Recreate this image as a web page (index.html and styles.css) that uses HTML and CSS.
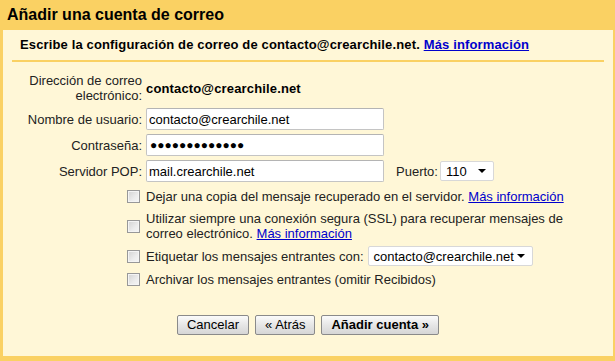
FILE: index.html
```html
<!DOCTYPE html>
<html lang="es">
<head>
<meta charset="utf-8">
<title>Añadir una cuenta de correo</title>
<link rel="stylesheet" href="styles.css">
</head>
<body>
<div class="dialog">
  <h1 class="title">Añadir una cuenta de correo</h1>
  <div class="panel">
    <p class="intro">Escribe la configuración de correo de contacto@crearchile.net. <a href="#" class="link">Más información</a></p>
    <div class="separator"></div>
    <div class="form">
      <div class="label first">Dirección de correo<br>electrónico:</div>
      <div class="value first">contacto@crearchile.net</div>

      <div class="label">Nombre de usuario:</div>
      <div class="field"><input class="text-input" type="text" value="contacto@crearchile.net"></div>

      <div class="label">Contraseña:</div>
      <div class="field"><input class="text-input secret" type="text" value="●●●●●●●●●●●●●"></div>

      <div class="label">Servidor POP:</div>
      <div class="field">
        <input class="text-input" type="text" value="mail.crearchile.net">
        <span class="port-label">Puerto:</span>
        <div class="select port"><span>110</span><span class="caret"></span></div>
      </div>
    </div>

    <div class="options">
      <div class="opt"><span class="cb"></span><span class="opt-text">Dejar una copia del mensaje recuperado en el servidor. <a href="#" class="link plain">Más información</a></span></div>
      <div class="opt two"><span class="cb"></span><span class="opt-text">Utilizar siempre una conexión segura (SSL) para recuperar mensajes de correo electrónico. <a href="#" class="link plain">Más información</a></span></div>
      <div class="opt"><span class="cb"></span><span class="opt-text row">Etiquetar los mensajes entrantes con: <span class="select label-select"><span>contacto@crearchile.net</span><span class="caret"></span></span></span></div>
      <div class="opt"><span class="cb"></span><span class="opt-text">Archivar los mensajes entrantes (omitir Recibidos)</span></div>
    </div>

    <div class="buttons">
      <button class="btn">Cancelar</button>
      <button class="btn">« Atrás</button>
      <button class="btn primary">Añadir cuenta »</button>
    </div>
  </div>
</div>
</body>
</html>
```

FILE: styles.css
```css
html {
  background: #fad163;
}
body {
  margin: 0;
  font-family: "Liberation Sans", Arial, sans-serif;
  font-size: 13px;
  color: #000;
}
.dialog {
  background: #fad163;
  padding: 0 2px 5px 3px;
}
.title {
  margin: 0;
  height: 30px;
  line-height: 30px;
  padding-left: 4px;
  font-size: 16px;
  font-weight: bold;
  color: #000;
}
.panel {
  background: #fff7d7;
  padding: 7px 0 21px 0;
}
.intro {
  margin: 0;
  padding-left: 17px;
  line-height: 15px;
  font-weight: bold;
  letter-spacing: 0.14px;
}
.link {
  color: #0000cc;
  text-decoration: underline;
}
.link.plain {
  font-weight: normal;
}
.separator {
  margin: 8px 9px 0 9px;
  height: 2px;
  background: #fad163;
}
.form {
  margin-top: 11px;
  display: grid;
  grid-template-columns: 139px auto;
  column-gap: 4px;
  row-gap: 4px;
  align-items: center;
}
.label {
  text-align: right;
  color: #222;
  line-height: 15px;
}
.label.first,
.value.first {
  margin-bottom: 1px;
}
.value {
  font-weight: bold;
  line-height: 15px;
  letter-spacing: 0.15px;
}
.field {
  display: flex;
  align-items: center;
}
.text-input {
  box-sizing: border-box;
  width: 238px;
  height: 22px;
  margin: 0;
  padding: 0 2px;
  border: 1px solid #c4c4c4;
  border-top-color: #b4b4b4;
  border-radius: 2px;
  background: #fff;
  font-family: "Liberation Sans", Arial, sans-serif;
  font-size: 13px;
  color: #000;
  outline: none;
}
.text-input.secret {
  font-size: 12px;
  padding-left: 3px;
}
.port-label {
  margin-left: 12px;
  margin-right: 2px;
  color: #222;
}
.select {
  box-sizing: border-box;
  display: inline-flex;
  align-items: center;
  justify-content: space-between;
  height: 20px;
  padding: 0 7px 0 5px;
  background: #fff;
  border: 1px solid #d8d8d8;
  border-radius: 2px;
  color: #000;
}
.select.port {
  width: 54px;
}
.select.label-select {
  width: 165px;
  margin-left: 4px;
}
.caret {
  width: 0;
  height: 0;
  border-left: 4px solid transparent;
  border-right: 4px solid transparent;
  border-top: 4px solid #000;
}
.options {
  margin-top: 4px;
  padding-left: 124px;
  display: flex;
  flex-direction: column;
  gap: 3px;
}
.opt {
  display: flex;
  align-items: center;
  min-height: 20px;
  gap: 6px;
}
.opt.two {
  min-height: 34px;
}
.cb {
  flex: none;
  box-sizing: border-box;
  width: 13px;
  height: 13px;
  border: 1px solid #989898;
  background: linear-gradient(135deg, #d2d2d2 0%, #ececec 60%, #f6f6f6 100%);
  box-shadow: inset 0 0 0 1px #f4f4f4;
}
.opt-text {
  width: 425px;
  line-height: 15px;
  color: #222;
}
.opt-text.row {
  display: flex;
  align-items: center;
}
.buttons {
  margin-top: 26px;
  display: flex;
  justify-content: center;
  gap: 6px;
}
.btn {
  box-sizing: border-box;
  height: 20px;
  margin: 0;
  padding: 0 9px;
  border: 1px solid #8a8a8a;
  border-radius: 2px;
  background: linear-gradient(#fbfbfb, #e6e6e6 50%, #d6d6d6);
  font-family: "Liberation Sans", Arial, sans-serif;
  font-size: 13px;
  color: #000;
  line-height: 18px;
}
.btn.primary {
  font-weight: bold;
}
```
